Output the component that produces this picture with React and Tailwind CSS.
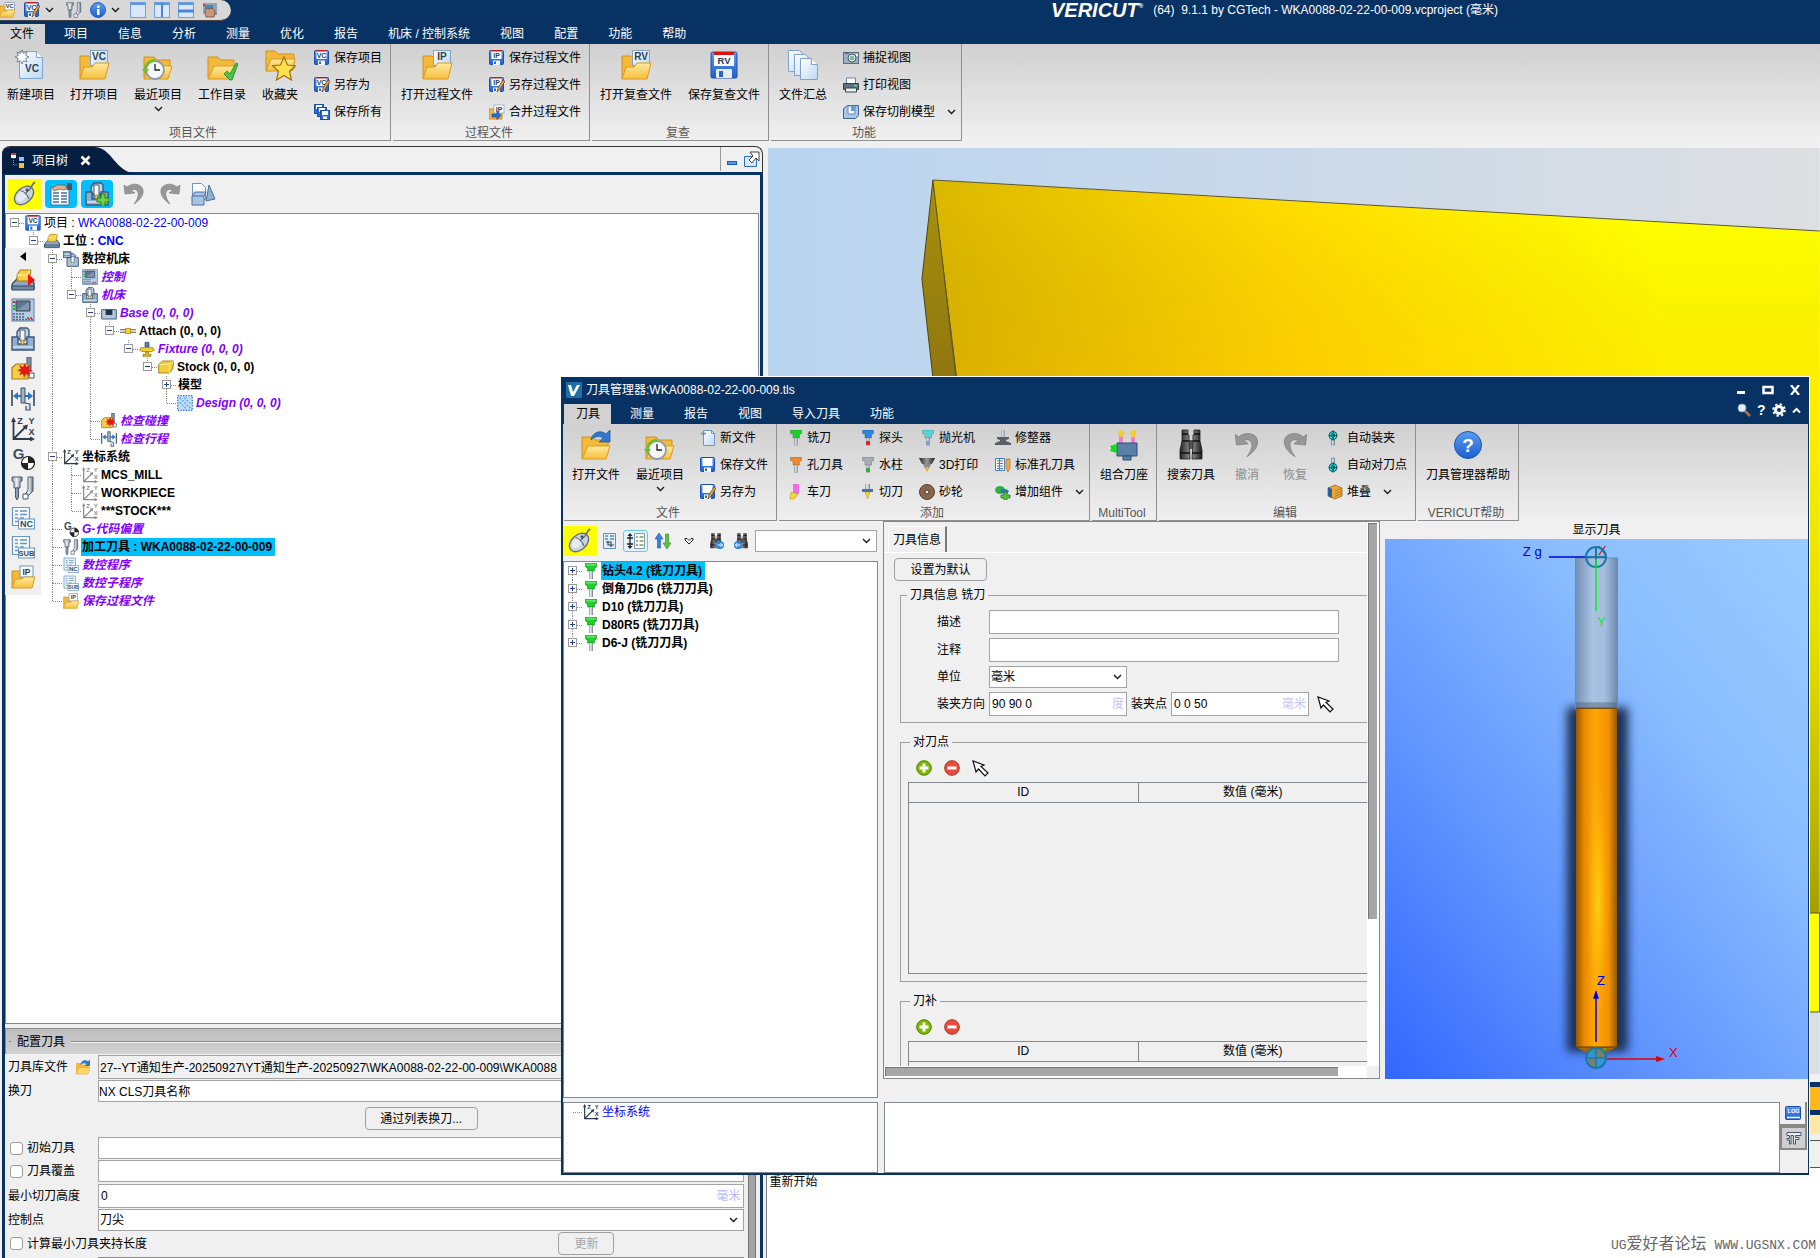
import { useState } from 'react';

/* ---------- shared svg paint ---------- */

const SvgDefs = () => (
    <svg className="absolute h-0 w-0" aria-hidden="true">
        <defs>
            <linearGradient id="gFolder" x1="0" y1="0" x2="0" y2="1">
                <stop offset="0" stopColor="#ffe9a0" />
                <stop offset="1" stopColor="#f8bf3c" />
            </linearGradient>
            <linearGradient id="gBlue" x1="0" y1="0" x2="0" y2="1">
                <stop offset="0" stopColor="#5b9cf0" />
                <stop offset="1" stopColor="#1f5fd0" />
            </linearGradient>
            <linearGradient id="gPage" x1="0" y1="0" x2="1" y2="1">
                <stop offset="0" stopColor="#ffffff" />
                <stop offset="1" stopColor="#bcd8f2" />
            </linearGradient>
            <linearGradient id="gMetal" x1="0" y1="0" x2="1" y2="0">
                <stop offset="0" stopColor="#8b97a5" />
                <stop offset="0.45" stopColor="#eef2f6" />
                <stop offset="1" stopColor="#6b7785" />
            </linearGradient>
            <linearGradient id="gDark" x1="0" y1="0" x2="1" y2="0">
                <stop offset="0" stopColor="#222222" />
                <stop offset="0.5" stopColor="#9a9a9a" />
                <stop offset="1" stopColor="#1a1a1a" />
            </linearGradient>
        </defs>
    </svg>
);

const Badge = ({ x, y, size, children, fill = '#2c3e57' }) => (
    <text x={x} y={y} fontSize={size} fontWeight="700" textAnchor="middle" fill={fill} fontFamily="Liberation Sans, sans-serif">{children}</text>
);

const Chevron = ({ className = '' }) => (
    <svg width="9" height="6" viewBox="0 0 9 6" className={className}>
        <path d="M1 1l3.500 3.500L8 1" fill="none" stroke="#1a1a1a" strokeWidth="1.400" />
    </svg>
);

/* ---------- 32px icons ---------- */

const FolderShape = () => (
    <>
        <path d="M2 30V8h10l3 3h13v8" fill="#f3b93a" stroke="#d1921a" />
        <path d="M2 30l6-13h22l-4 13z" fill="url(#gFolder)" stroke="#d99a1e" />
    </>
);

const FolderBadge = ({ badge }) => (
    <svg width="32" height="32" viewBox="0 0 32 32">
        <path d="M2 30V7h9l3 3h14v8" fill="#f3b93a" stroke="#d1921a" />
        <rect x="12.500" y="1.500" width="17" height="15" fill="url(#gPage)" stroke="#7fa3cc" />
        <Badge x="21" y="11" size="10">{badge}</Badge>
        <path d="M2 30l4-12h8l3-4h14l-4 16z" fill="url(#gFolder)" stroke="#d99a1e" />
    </svg>
);

const NewProjectIcon = () => (
    <svg width="32" height="32" viewBox="0 0 32 32">
        <path d="M4.500 2.500h17l6 6v21h-23z" fill="url(#gPage)" stroke="#7fa3cc" />
        <path d="M21.500 2.500v6h6" fill="#fff" stroke="#7fa3cc" />
        <path d="M7 1l1.500 3.500L12 3l-1.300 3.500L14 8l-3.300 1.500L12 13l-3.500-1.300L7 15l-1.500-3.300L2 13l1.300-3.500L0 8l3.300-1.500L2 3l3.500 1.500z" fill="#fff" stroke="#5d6b7a" strokeWidth="0.800" />
        <Badge x="17" y="23" size="10">VC</Badge>
    </svg>
);

const RecentIcon = () => (
    <svg width="32" height="32" viewBox="0 0 32 32">
        <FolderShape />
        <circle cx="13" cy="21" r="9" fill="#f4f6f8" stroke="#8d9aa8" strokeWidth="1.800" />
        <path d="M13 15v6h5" fill="none" stroke="#222" strokeWidth="1.300" />
        <path d="M3.500 22C2.500 16 7 11.500 13 11" fill="none" stroke="#6cbf28" strokeWidth="2.600" />
        <path d="M0 20h7l-3.500 5z" fill="#6cbf28" />
    </svg>
);

const WorkDirIcon = () => (
    <svg width="32" height="32" viewBox="0 0 32 32">
        <FolderShape />
        <path d="M18 25l3-3 3 3 6-11 2 1-6 16h-2z" fill="#4cc24a" stroke="#1f8420" strokeWidth="0.800" />
    </svg>
);

const FavoriteIcon = () => (
    <svg width="32" height="32" viewBox="0 0 32 32">
        <path d="M2 22V2h9l3 3h16v15z" fill="#f3b93a" stroke="#d1921a" />
        <path d="M2 22l5-12h24l-3 12z" fill="url(#gFolder)" stroke="#d99a1e" />
        <path d="M20 8l3.500 8 8 .8-6 5.500 2 8.700-7.500-4.500L12.500 31l2-8.700-6-5.500 8-.8z" fill="#ffe14d" stroke="#a36b1a" strokeWidth="1.200" />
    </svg>
);

const OpenFileIcon = () => (
    <svg width="32" height="32" viewBox="0 0 32 32">
        <FolderShape />
        <path d="M11 11C12 4 20 0 26 5l4-4v12H19l4-4c-4-3-9-1-12 2z" fill="#2f78cf" stroke="#174f99" strokeWidth="0.700" />
    </svg>
);

const FloppyLarge = () => (
    <svg width="32" height="32" viewBox="0 0 32 32">
        <rect x="3" y="3" width="26" height="26" rx="1.500" fill="url(#gBlue)" stroke="#1a4fae" />
        <rect x="6" y="3" width="20" height="14" fill="#fff" />
        <rect x="6" y="3" width="20" height="3" fill="#e01010" />
        <Badge x="16" y="15" size="9.500">RV</Badge>
        <rect x="8" y="20" width="16" height="9" rx="1" fill="#e6ebf2" />
        <rect x="11" y="22" width="4" height="6" fill="#2a66cf" />
    </svg>
);

const SummaryIcon = () => (
    <svg width="32" height="32" viewBox="0 0 32 32">
        <path d="M1.500 1.500h11l5 5v16h-16z" fill="url(#gPage)" stroke="#7fa3cc" />
        <path d="M7.500 5.500h11l5 5v16h-16z" fill="url(#gPage)" stroke="#7fa3cc" />
        <path d="M13.500 9.500h11l6 6v15h-17z" fill="url(#gPage)" stroke="#7fa3cc" />
        <path d="M24.500 9.500v6h6" fill="#fff" stroke="#7fa3cc" />
    </svg>
);

const MultiToolIcon = () => (
    <svg width="32" height="32" viewBox="0 0 32 32">
        <path d="M11 7h4v8h-4zM23 7h4v8h-4z" fill="#f57ad6" />
        <path d="M10 2l4-1 2 2v6l-5-2zM22 3l4-2h2v6l-4 2z" fill="#f4cf2a" />
        <path d="M9 14h20v13H9z" fill="#5a7fa8" stroke="#2f4c70" />
        <path d="M15 27h8v4h-8z" fill="#5a7fa8" stroke="#2f4c70" />
        <path d="M2 17l7-2v9l-7-2z" fill="#1fd02a" />
        <path d="M0 18h3v3H0z" fill="#cfe8d0" />
    </svg>
);

const Binoculars = ({ size = 32 }) => (
    <svg width={size} height={size} viewBox="0 0 32 32">
        <path d="M13 11h6v9h-6z" fill="#555" />
        <path d="M7 1h6v5h1v6l1 18H5v-9l2-9V6zM19 1h6v5l0 6 2 9v9H17l1-18V6h1z" fill="url(#gDark)" stroke="#1e1e1e" strokeWidth="0.800" />
        <path d="M5 24h10M17 24h10M7 12h7M18 12h7M7 5h6M19 5h6" stroke="#111" strokeWidth="1.600" />
    </svg>
);

const UndoIcon = ({ size = 24, flip = false, fill = '#979797' }) => (
    <svg width={size} height={size} viewBox="0 0 24 24" className={flip ? '-scale-x-100' : ''}>
        <path d="M2 3l1 9 10-1-4-3c6-2 8 2 7 6-.5 3-2 5-4 8 6-4 10-9 9-14C20 2 11 0 5 5z" fill={fill} stroke="#7a7a7a" strokeWidth="0.600" />
    </svg>
);

const HelpIcon = () => (
    <svg width="32" height="32" viewBox="0 0 32 32">
        <circle cx="16" cy="16" r="13.500" fill="url(#gBlue)" stroke="#1a56b5" />
        <Badge x="16" y="23" size="19" fill="#fff">?</Badge>
    </svg>
);

/* ---------- 16px icons ---------- */

const Floppy = ({ badge, pencil, merge }) => (
    <svg width="16" height="16" viewBox="0 0 16 16" className="shrink-0">
        {merge && <path d="M0 15V5h7l2 2h4v8z" fill="#f3b93a" stroke="#a87510" strokeWidth="0.700" />}
        {!merge && <rect x="0.500" y="0.500" width="14" height="14" rx="1" fill="url(#gBlue)" stroke="#1a4fae" />}
        <rect x={merge ? 5 : 2.5} y="1" width="10" height="8" fill="#fff" stroke={merge ? '#7fa3cc' : 'none'} strokeWidth="0.700" />
        {badge && !merge && <rect x="2.500" y="0" width="10" height="1.500" fill="#c81818" />}
        {badge && <Badge x={merge ? 10 : 7.5} y="8" size="7">{badge}</Badge>}
        {!merge && <path d="M4 10.500h7V15H4z" fill="#f4f7fb" />}
        {!merge && <path d="M5 11.500h2V14H5z" fill="#2a66cf" />}
        {pencil && <path d="M8 15l1-4 5-8 2 1.300-5 8z" fill="#f0a53a" stroke="#5b3a12" strokeWidth="0.700" />}
        {merge && <path d="M3 10h5V7l4 4.500-4 4V13H3z" fill="#2b6cd6" stroke="#173f8c" strokeWidth="0.600" />}
    </svg>
);

const FloppyAll = () => (
    <svg width="16" height="16" viewBox="0 0 16 16" className="shrink-0">
        {[0, 3, 6].map((o) => (
            <g key={o}>
                <rect x={o + 0.5} y={o + 0.5} width="9" height="9" fill="#2f6fdc" stroke="#1a4fae" />
                <rect x={o + 2} y={o + 1} width="6" height="4" fill="#fff" />
                <rect x={o + 3} y={o + 6.5} width="4" height="2.500" fill="#fff" />
            </g>
        ))}
    </svg>
);

const CameraIcon = () => (
    <svg width="16" height="16" viewBox="0 0 16 16" className="shrink-0">
        <rect x="0.500" y="2.500" width="15" height="11" fill="#9fb0c2" stroke="#5a6b7d" />
        <path d="M2 2h4v2H2z" fill="#5a6b7d" />
        <circle cx="9" cy="8" r="4" fill="#fff" stroke="#3f5063" />
        <circle cx="9" cy="8" r="2.500" fill="#6cc0a0" />
        <path d="M13 4h2v2h-2z" fill="#fff" />
    </svg>
);

const PrinterIcon = () => (
    <svg width="16" height="16" viewBox="0 0 16 16" className="shrink-0">
        <path d="M3.500 1h9v6h-9z" fill="#fff" stroke="#6c87a5" />
        <path d="M0.500 6.500h15v6h-15z" fill="#5f7286" stroke="#33414f" />
        <path d="M2.500 11h11v4h-11z" fill="#eaf2e6" stroke="#33414f" />
        <path d="M11 8h3v1.500h-3z" fill="#7ed957" />
    </svg>
);

const CutModelIcon = () => (
    <svg width="16" height="16" viewBox="0 0 16 16" className="shrink-0">
        <path d="M0.500 4.500l4-3h11v10l-3 3h-12z" fill="#a9c6ea" stroke="#3e6497" />
        <path d="M5 2h7v8l-7 0z" fill="#f5f9fd" stroke="#6289bb" />
        <path d="M8 2h4v5H8z" fill="#6f9bd6" />
    </svg>
);

const NewFileIcon = () => (
    <svg width="16" height="16" viewBox="0 0 16 16" className="shrink-0">
        <path d="M3.500 0.500h8l3 3v12h-11z" fill="url(#gPage)" stroke="#6f96c2" />
        <path d="M11.500 0.500v3h3" fill="none" stroke="#6f96c2" />
        <path d="M3.500 1v5M1 3.500h5" stroke="#6f8fb3" strokeWidth="1.400" />
    </svg>
);

// small cutter glyph: holder on top, shank below
const CutterIcon = ({ color, tip }) => (
    <svg width="16" height="16" viewBox="0 0 16 16" className="shrink-0">
        <path d="M3.500 0h11v3.500l-2 1V8H6V4.500l-2.500-1z" fill={color} stroke="#00000055" strokeWidth="0.600" />
        <path d="M7.500 8h3v7.500h-3z" fill="url(#gMetal)" stroke="#8b97a5" strokeWidth="0.400" />
        {tip && <circle cx="9" cy="13" r="2.200" fill={tip} />}
    </svg>
);

const TurnIcon = () => (
    <svg width="16" height="16" viewBox="0 0 16 16" className="shrink-0">
        <path d="M6 0h6v9l-3 4H6z" fill="#ef6fe0" />
        <path d="M4 8l7 2-4 5H3z" fill="#f4d92c" stroke="#a88a10" strokeWidth="0.500" />
    </svg>
);

const KnifeIcon = () => (
    <svg width="16" height="16" viewBox="0 0 16 16" className="shrink-0">
        <path d="M6 0h5v5H6z" fill="url(#gMetal)" />
        <path d="M3 5h11v3H3z" fill="#4a6fb5" />
        <path d="M6 8h5l-2.500 7z" fill="#f4d92c" stroke="#a88a10" strokeWidth="0.500" />
    </svg>
);

const PrintHeadIcon = () => (
    <svg width="16" height="16" viewBox="0 0 16 16" className="shrink-0">
        <path d="M0 1h16l-3 6H3z" fill="url(#gDark)" />
        <path d="M4 7h8l-2 5H6z" fill="#8a8a8a" />
        <path d="M6 10h4l-2 6z" fill="#f2b51f" />
    </svg>
);

const WheelIcon = () => (
    <svg width="16" height="16" viewBox="0 0 16 16" className="shrink-0">
        <circle cx="8" cy="8" r="7.500" fill="#86664c" stroke="#5a4030" />
        <circle cx="8" cy="8" r="2" fill="#efe6dc" stroke="#4b3526" />
    </svg>
);

const DresserIcon = () => (
    <svg width="16" height="16" viewBox="0 0 16 16" className="shrink-0">
        <path d="M6.500 0h3v7h-3z" fill="url(#gMetal)" />
        <path d="M2 7h12v2l-3 1v1l5 2v2H0v-2l5-2v-1L2 9z" fill="#5c5f63" />
    </svg>
);

const HoleListIcon = () => (
    <svg width="16" height="16" viewBox="0 0 16 16" className="shrink-0">
        <path d="M0.500 1.500h9v12h-9z" fill="#fff" stroke="#4a7cc0" />
        <path d="M2 4h6M2 6.500h6M2 9h6M2 11.500h6M4.500 2v11" stroke="#4a7cc0" />
        <path d="M11 2h4v9l-2 4-2-4z" fill="#f0a848" stroke="#a8641c" strokeWidth="0.600" />
    </svg>
);

const AddPartIcon = () => (
    <svg width="16" height="16" viewBox="0 0 16 16" className="shrink-0">
        <ellipse cx="5" cy="6" rx="5" ry="4" fill="#27b43a" />
        <path d="M5 7c3-3 7-2 9 0l-3 5z" fill="#2d72cf" />
        <path d="M9 8h3v3h3v3h-3v2.500H9V14H6v-3h3z" fill="#58c63a" stroke="#1e7a1a" strokeWidth="0.800" />
    </svg>
);

const TargetIcon = ({ down }) => (
    <svg width="16" height="16" viewBox="0 0 16 16" className={down ? 'shrink-0 -scale-y-100' : 'shrink-0'}>
        <path d="M4.500 9h3v6h-3z" fill="url(#gMetal)" stroke="#5f7286" strokeWidth="0.500" />
        <path d="M6 0l4.500 5.500L6 11 1.500 5.500z" fill="#0f6f78" />
        <circle cx="6" cy="5.500" r="4" fill="#2be4e4" stroke="#0e5b63" />
        <circle cx="6" cy="5.500" r="1.800" fill="none" stroke="#0b4f4f" />
        <path d="M6 1v9M2 5.500h8" stroke="#0b4f4f" strokeWidth="0.800" />
    </svg>
);

const StackIcon = () => (
    <svg width="16" height="16" viewBox="0 0 16 16" className="shrink-0">
        <path d="M1 4l7-3 7 3v8l-7 3-7-3z" fill="#eaa632" stroke="#8f5a10" strokeWidth="0.700" />
        <path d="M8 7l7-3M8 10l7-3M8 12.500l7-3" stroke="#a86a14" strokeWidth="0.700" />
        <path d="M1 3l4 2v9l-4-2z" fill="#2c5d9e" />
    </svg>
);

const WindowIcon = ({ split }) => (
    <svg width="16" height="16" viewBox="0 0 16 16">
        <rect x="0.500" y="0.500" width="15" height="15" fill="#d9e9fb" stroke="#6f9fe0" />
        <path d="M1 1h14v2H1z" fill="#5f97e6" />
        {split === 'v' && <path d="M8 1v14" stroke="#4a86dc" strokeWidth="2" />}
        {split === 'h' && <path d="M0 9h16" stroke="#4a86dc" strokeWidth="3" />}
    </svg>
);

const HandPanelIcon = () => (
    <svg width="16" height="16" viewBox="0 0 16 16">
        <rect x="1" y="1" width="14" height="11" fill="#8fa3b8" />
        <path d="M3 3h8v4H3z" fill="#4b86b8" />
        <path d="M1 2h2v2H1z" fill="#e03030" />
        <path d="M11 11h4v2h-4z" fill="#7c8fa4" />
        <path d="M4 15l-1-6 2-3 2 1 3-1 3 3-1 6z" fill="#c9977a" stroke="#6b4632" strokeWidth="0.700" />
    </svg>
);

const InfoIcon = () => (
    <svg width="16" height="16" viewBox="0 0 16 16">
        <circle cx="8" cy="8" r="7.500" fill="url(#gBlue)" stroke="#2a62bd" />
        <path d="M7 7h2.500v6H7zM7 3.500h2.500V6H7z" fill="#fff" />
    </svg>
);

const PointerIcon = () => (
    <svg width="17" height="17" viewBox="0 0 17 17">
        <path d="M1 1l3 11 2.500-3L13 16l3-3-7-6.500L12 5z" fill="#fff" stroke="#111" strokeWidth="1.200" />
    </svg>
);

const PlusIcon = () => (
    <svg width="16" height="16" viewBox="0 0 16 16">
        <circle cx="8" cy="8" r="7.300" fill="#7cb800" stroke="#4f8200" />
        <path d="M6.500 3.500h3v3h3v3h-3v3h-3v-3h-3v-3h3z" fill="#fff" />
    </svg>
);

const MinusIcon = () => (
    <svg width="16" height="16" viewBox="0 0 16 16">
        <circle cx="8" cy="8" r="7.300" fill="#e94b3c" stroke="#b52a1e" />
        <path d="M3.500 6.500h9v3h-9z" fill="#fff" />
    </svg>
);

const MouseIcon = () => (
    <svg width="26" height="26" viewBox="0 0 26 26">
        <path d="M18 8c2-2 1-4 5-7" fill="none" stroke="#6b7280" strokeWidth="1.800" />
        <ellipse cx="12" cy="14.500" rx="11" ry="7.500" transform="rotate(-42 12 14.500)" fill="#ccd4de" stroke="#5f6c7d" strokeWidth="1.300" />
        <ellipse cx="10" cy="15" rx="6.500" ry="4" transform="rotate(-42 10 15)" fill="#e6ebf1" />
        <path d="M8.500 9.500c3.500 1 7 4.500 8.500 8.500M13 13l6-6" fill="none" stroke="#5f6c7d" strokeWidth="1.200" />
        <path d="M14 10l2-2" stroke="#48535f" strokeWidth="2.500" />
    </svg>
);

/* ---------- icons used in both the tree (16) and the side strip (24) ---------- */

const MachineArt = () => (
    <>
        <path d="M6 12V5l3-4h7l2 2v9z" fill="#c2d4e6" stroke="#3c5876" strokeWidth="1.400" />
        <path d="M1 10h6v7h9v-7h7v13H1z" fill="#8fb0d2" stroke="#3c5876" strokeWidth="1.400" />
        <path d="M9 3h5v11H9z" fill="#f4f8fb" stroke="#3c5876" />
        <path d="M10 13h3v3l-1.500 2L10 16z" fill="#f0c52a" stroke="#8a6a10" strokeWidth="0.500" />
        <path d="M2 20h20" stroke="#d5e3f0" strokeWidth="1.500" />
    </>
);

const AxesArt = ({ color }) => (
    <>
        <path d="M2.500 4v18H20M3.500 21L15 9.500" fill="none" stroke={color} strokeWidth="1.800" />
        <path d="M2.500 0L0 5h5zM24 22l-5-2.500v5zM17 7.500l-5.500 1.500 4 4z" fill={color} />
        <Badge x="9" y="7" size="9" fill={color}>Z</Badge>
        <Badge x="20.500" y="7" size="9" fill={color}>Y</Badge>
        <Badge x="20.500" y="18" size="9" fill={color}>X</Badge>
    </>
);

const DocArt = ({ label }) => (
    <>
        <path d="M1.500 1.500h17v18h-17z" fill="#f4f9fe" stroke="#6a94c4" strokeWidth="1.200" />
        <path d="M4 5h3M9 5h7M4 8.500h3M9 8.500h7M4 12h3M9 12h4M4 15.500h3" stroke="#6a94c4" strokeWidth="1.400" />
        <rect x="7.500" y="13" width="16" height="10" fill="#f4f9fe" stroke="#6a94c4" />
        <Badge x="15.500" y="21" size={label === 'NC' ? 9 : 7.5} fill="#3a4b5e">{label}</Badge>
    </>
);

const treeArt = {
    project: (
        <>
            <rect x="1" y="1" width="22" height="22" rx="1" fill="url(#gBlue)" stroke="#1a4fae" />
            <rect x="4" y="1" width="16" height="13" fill="#fff" />
            <rect x="4" y="0" width="16" height="2.500" fill="#c81818" />
            <Badge x="12" y="12" size="10">VC</Badge>
            <path d="M6 16h12v7H6z" fill="#f4f7fb" />
            <path d="M8 17.500h3V22H8z" fill="#2a66cf" />
        </>
    ),
    station: (
        <>
            <path d="M2 15l4-4h14l3 4v6H1v-4z" fill="#8fa7c0" stroke="#33485e" strokeWidth="1.300" />
            <path d="M1 18h22v4H1z" fill="#6e8aa7" stroke="#33485e" />
            <path d="M6 7l3-5h11l-2 11H6z" fill="#f7cf47" stroke="#a67a12" />
            <path d="M6 7h10l3-5" fill="none" stroke="#fff3b8" />
        </>
    ),
    cnc: (
        <>
            <path d="M6 10h4V4h6l3 3v3h4v13H6z" fill="#a9c2dc" stroke="#3c5876" strokeWidth="1.400" />
            <path d="M12 8h5v9h-5z" fill="#eef3f8" stroke="#3c5876" />
            <path d="M13 17h3l-1.500 3z" fill="#f0c52a" />
            <path d="M0 1h12v9H0z" fill="#6e8caa" stroke="#34495f" />
            <path d="M2 3h8v3H2z" fill="#bcd4ea" />
            <path d="M2 8h2M5 8h2M8 8h2" stroke="#fff" strokeWidth="1.200" />
        </>
    ),
    control: (
        <>
            <rect x="1" y="1" width="22" height="22" fill="#b9cde2" stroke="#5f7c9b" />
            <path d="M5 3h14v10H5z" fill="#5f7790" stroke="#384b5e" />
            <path d="M6 12L18 4v8z" fill="#7f97af" />
            <path d="M2 4h2" stroke="#e02020" strokeWidth="2" />
            <path d="M2 8h2M2 11h2" stroke="#21b030" strokeWidth="2" />
            <path d="M2 16h12M2 19h12M2 21.500h20" stroke="#4c6885" strokeWidth="1.400" strokeDasharray="2 1" />
            <path d="M16 20h6" stroke="#e02020" strokeWidth="1.500" strokeDasharray="2 1" />
        </>
    ),
    machine: <MachineArt />,
    base: (
        <>
            <path d="M1 7h22v14H1z" fill="#b5c8da" stroke="#44607c" strokeWidth="1.500" />
            <path d="M7 7h10v8H7z" fill="#1f3348" />
        </>
    ),
    attach: (
        <>
            <path d="M0 10h24M0 14h24" stroke="#5b5b3c" strokeWidth="1.600" />
            <rect x="8" y="8" width="8" height="8" rx="1" fill="#f7cf2f" stroke="#8a6a10" />
        </>
    ),
    fixture: (
        <>
            <path d="M9 2h6v7H9z" fill="#5c7ea3" stroke="#2e4966" />
            <path d="M3 10h18l2 4-5 2H6l-5-2z" fill="#f7cf2f" stroke="#8a6a10" />
            <path d="M10 16h4v4h4v3H6v-3h4z" fill="#e8b920" stroke="#8a6a10" />
        </>
    ),
    stock: (
        <>
            <path d="M1 8l6-5h17l-2 12-5 6H1z" fill="#f4cc3d" stroke="#9b7614" strokeWidth="1.300" />
            <path d="M1 8h16l7-5M17 8v13" fill="none" stroke="#fff0a8" strokeWidth="1.300" />
        </>
    ),
    design: (
        <>
            <rect x="1" y="1" width="22" height="22" fill="#bcdcf8" stroke="#2b70b8" strokeWidth="1.800" strokeDasharray="2 2" />
            <path d="M4 4l16 16M4 11l9 9M11 4l9 9" stroke="#6aa6dc" strokeWidth="2" strokeDasharray="3 2" />
        </>
    ),
    collision: (
        <>
            <path d="M16 0h4v14h-4z" fill="#8296ab" stroke="#3e5064" />
            <path d="M18 16h5v5h-5z" fill="#fff" stroke="#3e5064" />
            <path d="M1 11l4-4h12v15H1z" fill="#f7cf47" stroke="#a67a12" strokeWidth="1.200" />
            <path d="M14 6l1.500 4 4-2-1.500 4 4 2-4 1 1 4-4-2-2 4-1-4-4 1 2-3-4-2 4-1-2-4 4 2z" fill="#e01818" />
        </>
    ),
    travel: (
        <>
            <path d="M1 3v16M23 3v16" stroke="#33485e" strokeWidth="1.600" />
            <path d="M2 9l5-4v3h3v2H7v3zM22 9l-5-4v3h-3v2h3v3z" fill="#2a74c9" />
            <path d="M10 1h4v15h-4z" fill="#9fb2c6" stroke="#3e5064" />
            <path d="M14 16l5 1v6h-4v-4" fill="#dce5ee" stroke="#3e5064" strokeWidth="1.200" />
        </>
    ),
    axes: <AxesArt color="#2d3b4b" />,
    axesGray: <AxesArt color="#8a8a8a" />,
    gcode: (
        <>
            <Badge x="7.500" y="13" size="15" fill="#3b4e63">G</Badge>
            <circle cx="17" cy="17" r="6.500" fill="#fff" stroke="#222" strokeWidth="1.200" />
            <path d="M17 17V10.500a6.500 6.500 0 0 1 6.500 6.500zM17 17v6.500a6.500 6.500 0 0 1-6.500-6.500z" fill="#222" />
        </>
    ),
    tools: (
        <>
            <path d="M1 1h10v4l-2 1v6H3V6L1 5z" fill="url(#gMetal)" stroke="#4a5a6b" />
            <path d="M4.500 12h3v9L6 24l-1.500-3z" fill="#8ea0b2" stroke="#4a5a6b" />
            <path d="M17 1h5v14l-4 4h-4l3-5z" fill="url(#gMetal)" stroke="#4a5a6b" />
            <path d="M12 18h5v5h-5z" fill="#fff" stroke="#4a5a6b" />
        </>
    ),
    nc: <DocArt label="NC" />,
    sub: <DocArt label="SUB" />,
    saveIp: (
        <>
            <path d="M1 23V6h7l2 2h10v6" fill="#f3b93a" stroke="#d1921a" />
            <rect x="9" y="1" width="13" height="11" fill="#fff" stroke="#6a94c4" />
            <Badge x="15.500" y="9.500" size="8.500">IP</Badge>
            <path d="M1 23l3-9h7l2-2h11l-3 11z" fill="url(#gFolder)" stroke="#d99a1e" />
        </>
    ),
    openVc: (
        <>
            <path d="M1 23V6h7l2 2h10v6" fill="#f3b93a" stroke="#d1921a" />
            <rect x="9" y="1" width="14" height="11" fill="#fff" stroke="#6a94c4" />
            <Badge x="16" y="9.500" size="8.500">VC</Badge>
            <path d="M1 23l3-9h7l2-2h11l-3 11z" fill="url(#gFolder)" stroke="#d99a1e" />
        </>
    ),
    mill: (
        <>
            <path d="M4 0h16v6l-3 2v4H7V8L4 6z" fill="#1fd02a" stroke="#0c7a18" />
            <path d="M5 1h14v3H5z" fill="#5be863" />
            <path d="M9 12h6v12H9z" fill="url(#gMetal)" />
        </>
    ),
};

const Art = ({ name, size = 16 }) => (
    <svg width={size} height={size} viewBox="0 0 24 24" className="shrink-0">{treeArt[name]}</svg>
);

/* ---------- tree ---------- */

// dotted guide cell; box is '+', '-' or undefined
const Guide = ({ up, down, across, box }) => (
    <svg width="19" height="18" viewBox="0 0 19 18" className="shrink-0">
        <g stroke="#8a8a8a" strokeDasharray="1 1">
            {up && <path d="M8.500 0v9" />}
            {down && <path d="M8.500 9v9" />}
            {across && <path d="M9 9.500h9" />}
        </g>
        {box && (
            <g>
                <rect x="4.500" y="4.500" width="8" height="8" fill="#fff" stroke="#9a9a9a" />
                <path d="M6 8.500h5" stroke="#23408e" />
                {box === '+' && <path d="M8.500 6v5" stroke="#23408e" />}
            </g>
        )}
    </svg>
);

const projectRows = [
    { level: 0, box: '-', icon: 'project', text: '项目 : ', tail: 'WKA0088-02-22-00-009', style: 'plain' },
    { level: 1, box: '-', icon: 'station', text: '工位 : ', tail: 'CNC' },
    { level: 2, box: '-', icon: 'cnc', text: '数控机床' },
    { level: 3, icon: 'control', text: '控制', style: 'dim' },
    { level: 3, box: '-', icon: 'machine', text: '机床', style: 'dim' },
    { level: 4, box: '-', icon: 'base', text: 'Base (0, 0, 0)', style: 'dim' },
    { level: 5, box: '-', icon: 'attach', text: 'Attach (0, 0, 0)' },
    { level: 6, box: '-', icon: 'fixture', text: 'Fixture (0, 0, 0)', style: 'dim' },
    { level: 7, box: '-', icon: 'stock', text: 'Stock (0, 0, 0)' },
    { level: 8, box: '+', text: '模型' },
    { level: 8, icon: 'design', text: 'Design (0, 0, 0)', style: 'dim' },
    { level: 4, icon: 'collision', text: '检查碰撞', style: 'dim' },
    { level: 4, icon: 'travel', text: '检查行程', style: 'dim' },
    { level: 2, box: '-', icon: 'axes', text: '坐标系统' },
    { level: 3, icon: 'axesGray', text: 'MCS_MILL' },
    { level: 3, icon: 'axesGray', text: 'WORKPIECE' },
    { level: 3, icon: 'axesGray', text: '***STOCK***' },
    { level: 2, icon: 'gcode', text: 'G-代码偏置', style: 'dim' },
    { level: 2, icon: 'tools', text: '加工刀具 : WKA0088-02-22-00-009', selected: true },
    { level: 2, icon: 'nc', text: '数控程序', style: 'dim' },
    { level: 2, icon: 'sub', text: '数控子程序', style: 'dim' },
    { level: 2, icon: 'saveIp', text: '保存过程文件', style: 'dim' },
];

const toolRows = ['钻头4.2 (铣刀刀具)', '倒角刀D6 (铣刀刀具)', 'D10 (铣刀刀具)', 'D80R5 (铣刀刀具)', 'D6-J (铣刀刀具)'].map((text, i) => ({
    level: 0, box: '+', icon: 'mill', text, selected: i === 0,
}));

const continues = (rows, index, level) => {
    for (let i = index + 1; i < rows.length; i++) {
        if (rows[i].level < level) return false;
        if (rows[i].level === level) return true;
    }
    return false;
};

const rowStyles = {
    plain: '',
    bold: 'font-bold',
    dim: 'font-bold italic text-[#8000ff]',
};

const Tree = ({ rows }) => (
    <ul>
        {rows.map((row, i) => (
            <li key={row.text} className="flex h-[18px] items-center whitespace-nowrap">
                {Array.from({ length: row.level }, (_, level) => {
                    const line = continues(rows, i, level);
                    return <Guide key={level} up={line} down={line} />;
                })}
                <Guide up={i > 0} down={continues(rows, i, row.level)} across box={row.box} />
                {row.icon && <Art name={row.icon} />}
                <span className={`${row.icon ? 'ml-[2px]' : ''} h-[18px] pr-[3px] pl-px leading-[18px] ${rowStyles[row.style || 'bold']} ${row.selected ? 'bg-[#00bfff]' : ''}`}>
                    {row.text}
                    {row.tail && <span className="text-[#0000ff]">{row.tail}</span>}
                </span>
            </li>
        ))}
    </ul>
);

/* ---------- ribbon ---------- */

const Group = ({ label, width, children }) => (
    <section className={`flex h-[97px] shrink-0 flex-col border-r border-b border-[#8f8f8f] ${width}`}>
        <div className="flex h-[82px]">{children}</div>
        <h3 className="pr-1 text-center leading-[14px] text-[#555]">{label}</h3>
    </section>
);

const BigButton = ({ icon, label, width = 'w-16', drop, disabled }) => (
    <button type="button" disabled={disabled} className={`flex shrink-0 flex-col items-center pt-[5px] whitespace-nowrap ${width} ${disabled ? 'text-[#8a8a8a]' : ''}`}>
        <span className="flex h-8 items-center">{icon}</span>
        <span className="mt-[6px] leading-4">{label}</span>
        {drop && <Chevron className="mt-[3px]" />}
    </button>
);

const SmallColumn = ({ items, className = 'pl-2' }) => (
    <div className={`flex shrink-0 flex-col ${className}`}>
        {items.map(({ icon, label, drop }) => (
            <button key={label} type="button" className="flex h-[27px] items-center gap-1 whitespace-nowrap">
                {icon}
                <span>{label}</span>
                {drop && <Chevron className="ml-2" />}
            </button>
        ))}
    </div>
);

const Tabs = ({ items, first }) => (
    <nav className="flex h-5 text-white">
        {items.map((name, i) => (
            <button key={name} type="button" className={i === 0 ? `mr-1 bg-[#d2d2d2] text-left text-black ${first}` : 'px-[15px]'}>{name}</button>
        ))}
    </nav>
);

const MainHeader = () => (
    <header>
        <div className="flex h-6 items-start bg-[#083264]">
            <div className="flex h-[21px] w-[231px] shrink-0 items-center rounded-r-full border-b border-[#444] bg-[#d8d8d8]">
                <button type="button" className="-ml-px" aria-label="打开"><Art name="openVc" /></button>
                <button type="button" className="ml-[9px]" aria-label="保存"><Floppy badge="VC" pencil /></button>
                <Chevron className="ml-[5px]" />
                <button type="button" className="ml-3" aria-label="刀具"><Art name="tools" /></button>
                <button type="button" className="ml-2" aria-label="信息"><InfoIcon /></button>
                <Chevron className="ml-[5px]" />
                <button type="button" className="ml-[10px]" aria-label="单视图"><WindowIcon /></button>
                <button type="button" className="ml-2" aria-label="左右视图"><WindowIcon split="v" /></button>
                <button type="button" className="ml-2" aria-label="上下视图"><WindowIcon split="h" /></button>
                <button type="button" className="ml-2" aria-label="面板"><HandPanelIcon /></button>
            </div>
            <h1 className="flex flex-1 justify-end gap-[10px] pr-[322px] text-white">
                <span className="text-xl leading-5 font-bold italic">VERICUT<span className="align-top text-[6px] leading-3">®</span></span>
                <span className="leading-5 whitespace-pre">(64)  9.1.1 by CGTech - WKA0088-02-22-00-009.vcproject (毫米)</span>
            </h1>
        </div>
        <div className="bg-[#083264]">
            <Tabs first="w-[45px] pl-[10px]" items={['文件', '项目', '信息', '分析', '测量', '优化', '报告', '机床 / 控制系统', '视图', '配置', '功能', '帮助']} />
        </div>
        <div className="flex gap-[2px] bg-linear-to-b from-[#d0d0d0] to-[#f0f0f0]">
            <Group label="项目文件" width="w-[391px]">
                <BigButton icon={<NewProjectIcon />} label="新建项目" width="w-[62px]" />
                <BigButton icon={<FolderBadge badge="VC" />} label="打开项目" />
                <BigButton icon={<RecentIcon />} label="最近项目" drop />
                <BigButton icon={<WorkDirIcon />} label="工作目录" />
                <BigButton icon={<FavoriteIcon />} label="收藏夹" width="w-[52px]" />
                <SmallColumn items={[
                    { icon: <Floppy badge="VC" />, label: '保存项目' },
                    { icon: <Floppy badge="VC" pencil />, label: '另存为' },
                    { icon: <FloppyAll />, label: '保存所有' },
                ]} />
            </Group>
            <Group label="过程文件" width="w-[197px]">
                <BigButton icon={<FolderBadge badge="IP" />} label="打开过程文件" width="w-[88px]" />
                <SmallColumn items={[
                    { icon: <Floppy badge="IP" />, label: '保存过程文件' },
                    { icon: <Floppy badge="IP" pencil />, label: '另存过程文件' },
                    { icon: <Floppy badge="IP" merge />, label: '合并过程文件' },
                ]} />
            </Group>
            <Group label="复查" width="w-[177px]">
                <BigButton icon={<FolderBadge badge="RV" />} label="打开复查文件" width="w-[88px]" />
                <BigButton icon={<FloppyLarge />} label="保存复查文件" width="w-[88px]" />
            </Group>
            <Group label="功能" width="w-[191px]">
                <BigButton icon={<SummaryIcon />} label="文件汇总" />
                <SmallColumn items={[
                    { icon: <CameraIcon />, label: '捕捉视图' },
                    { icon: <PrinterIcon />, label: '打印视图' },
                    { icon: <CutModelIcon />, label: '保存切削模型', drop: true },
                ]} />
            </Group>
        </div>
    </header>
);

/* ---------- project panel ---------- */

const sideIcons = [
    ['station', '工位'], ['control', '控制'], ['machine', '机床'], ['collision', '检查碰撞'], ['travel', '检查行程'], ['axes', '坐标系统'],
    ['gcode', 'G-代码偏置'], ['tools', '加工刀具'], ['nc', '数控程序'], ['sub', '数控子程序'], ['saveIp', '保存过程文件'],
];

const SideStrip = () => (
    <div className="absolute top-[34px] -left-px flex h-[347px] w-9 flex-col items-center bg-[#f0f0f0] pb-[3px]">
        <button type="button" className="flex h-[17px] items-center" aria-label="收起">
            <svg width="6" height="9" viewBox="0 0 6 9"><path d="M6 0v9L0 4.500z" fill="#000" /></svg>
        </button>
        {sideIcons.map(([name, label]) => (
            <button key={name} type="button" aria-label={label} className="flex flex-1 items-center">
                {name === 'station' ? (
                    <svg width="24" height="24" viewBox="0 0 24 24">
                        {treeArt.station}
                        <path d="M17 6l7 6-7 6z" fill="#f01010" />
                    </svg>
                ) : <Art name={name} size={24} />}
            </button>
        ))}
    </div>
);

const PanelHeader = () => (
    <div className="flex h-[29px] items-start rounded-t-lg border-t border-r border-b-[3px] border-[#333] border-b-[#083264]">
        <div className="relative flex h-[27px] w-[136px] items-center text-white">
            <svg width="136" height="27" viewBox="0 0 136 27" className="absolute inset-0">
                <path d="M0 27V8Q0 0 8 0H92C110 0 112 24 134 27z" fill="#051f42" />
            </svg>
            <svg width="16" height="16" viewBox="0 0 16 16" className="relative ml-2">
                <path d="M1 1h5v4H1z" fill="#fff" />
                <path d="M1 0h5v2H1z" fill="#e03030" />
                <path d="M9 4h5v4H9z" fill="#8fc0f0" />
                <path d="M9 10h5v5H9z" fill="#f0c52a" />
                <path d="M3.500 5v7h5" fill="none" stroke="#7d93ad" strokeDasharray="1 1" />
            </svg>
            <span className="relative ml-[6px]">项目树</span>
            <button type="button" aria-label="关闭" className="relative ml-3">
                <svg width="11" height="11" viewBox="0 0 11 11"><path d="M1.500 1.500l8 8M9.500 1.500l-8 8" stroke="#fff" strokeWidth="2.600" /></svg>
            </button>
        </div>
        <div className="ml-auto flex h-[24px] items-center border-l border-[#999] pl-[6px]">
            <button type="button" aria-label="最小化">
                <svg width="10" height="16" viewBox="0 0 10 16"><rect x="0.500" y="10.500" width="9" height="3" fill="#4f97f0" stroke="#1a5bb8" /></svg>
            </button>
            <button type="button" aria-label="弹出" className="mr-[2px] ml-[7px]">
                <svg width="16" height="16" viewBox="0 0 16 16">
                    <path d="M0.500 5.500h12v10h-12z" fill="#d7e9fc" stroke="#2a6cc8" />
                    <path d="M6 1h9v9l-3-3-4 5-3-3 4-4z" fill="#fff" stroke="#444" />
                </svg>
            </button>
        </div>
    </div>
);

const PanelToolbar = () => (
    <div className="flex h-[38px] items-center pl-[3px]">
        <button type="button" aria-label="选择" className="flex h-[30px] w-[34px] items-center justify-center bg-[#ffff00]"><MouseIcon /></button>
        <button type="button" aria-label="属性" className="ml-[3px] flex h-7 w-8 items-center justify-center rounded-sm bg-[#00bfff]">
            <svg width="24" height="24" viewBox="0 0 24 24">
                <path d="M2 5h18v18H2z" fill="#fff" stroke="#3f6ea8" />
                <path d="M4 11h6M12 11h6M4 14h6M12 14h6M4 17h6M12 17h6M4 20h6M12 20h6" stroke="#3f6ea8" strokeWidth="1.500" />
                <path d="M3 6l5-3h8l2 4-5 1-2-1-6 2z" fill="#dfb08e" stroke="#7a5238" strokeWidth="0.700" />
                <path d="M18 1h5v7h-5z" fill="#4c5560" />
            </svg>
        </button>
        <button type="button" aria-label="添加机床" className="ml-1 flex h-7 w-8 items-center justify-center rounded-sm bg-[#00bfff]">
            <svg width="24" height="24" viewBox="0 0 24 24">
                <MachineArt />
                <path d="M16 12h4v4h4v4h-4v4h-4v-4h-4v-4h4z" fill="#6fd33c" stroke="#1e7a1a" />
            </svg>
        </button>
        <button type="button" aria-label="撤消" className="ml-[9px]"><UndoIcon size={24} /></button>
        <button type="button" aria-label="恢复" className="ml-3"><UndoIcon size={24} flip /></button>
        <button type="button" aria-label="模型" className="ml-2">
            <svg width="26" height="26" viewBox="0 0 26 26">
                <path d="M2.500 2.500h9l4 4v12h-13z" fill="#fff" stroke="#6f96c2" />
                <path d="M19 4l6 14-9 2z" fill="#8fb0d4" stroke="#4a6f9c" />
                <path d="M2 15l3-4h11l-2 4v9H2z" fill="#a9c4e2" stroke="#4a6f9c" />
                <path d="M2 15h12" stroke="#4a6f9c" />
            </svg>
        </button>
    </div>
);

const field = 'border border-[#a3a3a3] bg-white outline-none';

const ToolForm = () => {
    const [form, setForm] = useState({
        library: '27--YT通知生产-20250927\\YT通知生产-20250927\\WKA0088-02-22-00-009\\WKA0088',
        change: 'NX CLS刀具名称',
        initial: '',
        override: '',
        minHeight: '0',
        controlPoint: '刀尖',
    });
    const update = (e) => setForm({ ...form, [e.target.name]: e.target.value });
    const row = 'grid grid-cols-[93px_1fr] items-center';
    const box = 'h-[13px] w-[13px] shrink-0 appearance-none rounded-[3px] border border-[#9a9a9a] bg-white';

    return (
        <form className="flex pr-1">
            <div className="min-w-0 flex-1">
                <div className="flex h-[26px] items-center border-t border-l border-[#8a8a8a] bg-linear-to-b from-[#bdbdbd] to-[#d2d2d2] pl-[3px]">
                    <span className="h-px w-[2px] bg-[#777]" />
                    <h2 className="mx-[6px]">配置刀具</h2>
                    <span className="h-[2px] flex-1 border-t border-[#8a8a8a] bg-[#f2f2f2]" />
                </div>
                <div className={`${row} mt-px h-6`}>
                    <div className="flex items-center pl-[3px]">
                        <label htmlFor="library">刀具库文件</label>
                        <button type="button" aria-label="浏览" className="ml-[7px]">
                            <svg width="16" height="16" viewBox="0 0 32 32"><path d="M2 30V8h10l3 3h13v8" fill="#f3b93a" /><path d="M2 30l6-13h22l-4 13z" fill="#ffd869" stroke="#d99a1e" /><path d="M11 11C12 2 22 0 26 5l4-4v13H19l4-4c-4-3-9-1-12 2z" fill="#2f78cf" /></svg>
                        </button>
                    </div>
                    <input id="library" name="library" value={form.library} onChange={update} className="h-6 min-w-0 border border-[#a3a3a3] bg-[#f0f0f0] pb-px pl-px outline-none" />
                </div>
                <div className={`${row} mt-px h-[22px]`}>
                    <label htmlFor="change" className="pl-[3px]">换刀</label>
                    <input id="change" name="change" value={form.change} onChange={update} className={`${field} h-[22px] min-w-0 pb-px`} />
                </div>
                <div className="mt-[5px] ml-[93px] flex justify-center">
                    <button type="button" className="h-[23px] w-[113px] rounded border border-[#a0a0a0]">通过列表换刀...</button>
                </div>
                <div className={`${row} mt-[7px] h-[22px]`}>
                    <label className="flex items-center gap-1 pl-[5px]"><input type="checkbox" className={box} />初始刀具</label>
                    <input name="initial" aria-label="初始刀具" value={form.initial} onChange={update} className={`${field} h-[22px] min-w-0`} />
                </div>
                <div className={`${row} mt-px h-[22px]`}>
                    <label className="flex items-center gap-1 pl-[5px]"><input type="checkbox" className={box} />刀具覆盖</label>
                    <input name="override" aria-label="刀具覆盖" value={form.override} onChange={update} className={`${field} h-[22px] min-w-0`} />
                </div>
                <div className={`${row} mt-[2px] h-6`}>
                    <label htmlFor="minHeight" className="pl-[3px]">最小切刀高度</label>
                    <div className={`${field} flex h-6 items-center pr-[3px]`}>
                        <input id="minHeight" name="minHeight" value={form.minHeight} onChange={update} className="min-w-0 flex-1 pl-[2px] outline-none" />
                        <span className="text-[#b9b9ff]">毫米</span>
                    </div>
                </div>
                <div className={`${row} mt-px h-[22px]`}>
                    <label htmlFor="controlPoint" className="pl-[3px]">控制点</label>
                    <div className="relative flex">
                        <select id="controlPoint" name="controlPoint" value={form.controlPoint} onChange={update} className={`${field} h-[22px] flex-1 appearance-none pl-px`}>
                            <option>刀尖</option>
                        </select>
                        <Chevron className="pointer-events-none absolute top-2 right-[6px]" />
                    </div>
                </div>
                <div className="mt-px flex h-[23px] items-center justify-between pr-[130px] pl-[5px]">
                    <label className="flex items-center gap-1"><input type="checkbox" className={box} />计算最小刀具夹持长度</label>
                    <button type="button" disabled className="h-[23px] w-[56px] rounded border border-[#a0a0a0] text-[#a5a5a5]">更新</button>
                </div>
                <div className="mt-[2px] ml-[93px] h-px bg-[#8a8a8a]" />
            </div>
            <div className="mt-[26px] ml-1 w-2 border-r border-l border-[#777] bg-[#a3a3a3]" />
        </form>
    );
};

const ProjectPanel = () => (
    <aside className="flex w-[42%] shrink-0 flex-col pt-[5px] pr-px pl-[2px]">
        <PanelHeader />
        <div className="flex min-h-0 flex-1 flex-col border-r-[3px] border-l-[3px] border-[#083264]">
            <PanelToolbar />
            <div className="relative mr-px mb-1 min-h-0 flex-1 border border-[#828790] bg-white">
                <Tree rows={projectRows} />
                <SideStrip />
            </div>
            <ToolForm />
        </div>
    </aside>
);

/* ---------- machine view ---------- */

const Workspace = () => (
    <main className="flex min-w-0 flex-1 flex-col pt-[7px]">
        <div className="ml-1 min-h-0 flex-1">
            <svg width="100%" height="100%" viewBox="0 0 1052 926" preserveAspectRatio="none" className="block">
                <defs>
                    <linearGradient id="sky" x1="0" y1="0" x2="1" y2="0">
                        <stop offset="0" stopColor="#b9d4f1" />
                        <stop offset="0.700" stopColor="#d2dbe6" />
                        <stop offset="1" stopColor="#dddfe2" />
                    </linearGradient>
                    <linearGradient id="face" gradientUnits="userSpaceOnUse" x1="165" y1="200" x2="860" y2="20">
                        <stop offset="0" stopColor="#d6b400" />
                        <stop offset="0.500" stopColor="#ffd900" />
                        <stop offset="1" stopColor="#ffff00" />
                    </linearGradient>
                    <linearGradient id="shade" gradientUnits="userSpaceOnUse" x1="0" y1="60" x2="0" y2="765">
                        <stop offset="0" stopColor="#8a5a00" stopOpacity="0" />
                        <stop offset="0.250" stopColor="#ff9a00" stopOpacity="0.160" />
                        <stop offset="0.600" stopColor="#806000" stopOpacity="0.200" />
                        <stop offset="1" stopColor="#403800" stopOpacity="0.480" />
                    </linearGradient>
                    <linearGradient id="side" x1="0" y1="0" x2="0" y2="1">
                        <stop offset="0" stopColor="#a8900c" />
                        <stop offset="0.300" stopColor="#8c7410" />
                        <stop offset="1" stopColor="#7a6512" />
                    </linearGradient>
                </defs>
                <rect width="1052" height="926" fill="url(#sky)" />
                <path d="M165 32L154 131L165 230L215 765H255z" fill="url(#side)" stroke="#4b4210" />
                <path d="M165 32L1052 83V765H255z" fill="url(#face)" />
                <path d="M165 32L1052 83V765H255z" fill="url(#shade)" />
                <path d="M165 32L1052 83M165 32L188 230" stroke="#5c5634" fill="none" />
                <path d="M255 765H1052V864H265z" fill="#ffff00" stroke="#5c5634" />
            </svg>
        </div>
        <div className="mt-2 border-y-[5px] border-[#083264] bg-[#ffb81c]"><div className="h-[23px]" /></div>
        <div className="h-[19px] bg-[#ffe8a6]" />
        <div className="mt-[6px] h-[28px] border-y border-[#555]" />
        <section className="ml-[2px] h-[90px] border-l border-[#777] bg-white pt-[5px]">
            <p className="pl-[2px] leading-[18px]">重新开始</p>
        </section>
    </main>
);

/* ---------- tool manager window ---------- */

const ManagerHeader = () => (
    <header className="bg-[#083264] text-white">
        <div className="flex">
            <div className="flex-1">
                <h2 className="mb-[2px] flex h-[25px] items-center gap-1 pl-[3px]">
                    <svg width="16" height="16" viewBox="0 0 16 16">
                        <rect width="16" height="16" rx="1" fill="#1d6fa5" />
                        <path d="M2 3h3l2 7 4-7h3L8 14H5z" fill="#fff" />
                    </svg>
                    刀具管理器:WKA0088-02-22-00-009.tls
                </h2>
                <div className="pl-px">
                    <Tabs first="w-[47px] pl-3" items={['刀具', '测量', '报告', '视图', '导入刀具', '功能']} />
                </div>
            </div>
            <div className="flex flex-col">
                <div className="mb-[2px] flex h-[25px] items-center gap-4 pr-2">
                    <button type="button" aria-label="最小化"><svg width="9" height="10" viewBox="0 0 9 10"><path d="M0 6h8v3H0z" fill="#fff" /></svg></button>
                    <button type="button" aria-label="最大化"><svg width="12" height="10" viewBox="0 0 12 10"><path d="M1.500 2h9v6h-9z" fill="none" stroke="#fff" strokeWidth="2.500" /></svg></button>
                    <button type="button" aria-label="关闭"><svg width="10" height="10" viewBox="0 0 10 10"><path d="M1 0l8 10M9 0L1 10" stroke="#fff" strokeWidth="2.200" /></svg></button>
                </div>
                <div className="flex h-3 items-center gap-[6px] pr-[6px]">
                    <button type="button" aria-label="搜索"><svg width="14" height="14" viewBox="0 0 14 14"><circle cx="5" cy="5" r="4" fill="#dff0ff" stroke="#9ab" /><path d="M8 8l5 5" stroke="#b07038" strokeWidth="2.500" /></svg></button>
                    <button type="button" className="text-sm leading-3 font-bold">?</button>
                    <button type="button" aria-label="设置"><svg width="14" height="14" viewBox="0 0 14 14"><circle cx="7" cy="7" r="3.500" fill="none" stroke="#fff" strokeWidth="3" /><circle cx="7" cy="7" r="5.800" fill="none" stroke="#fff" strokeWidth="2" strokeDasharray="2.300 2.250" /></svg></button>
                    <button type="button" aria-label="折叠"><svg width="9" height="7" viewBox="0 0 9 7"><path d="M1 5.500L4.500 2 8 5.500" fill="none" stroke="#fff" strokeWidth="2" /></svg></button>
                </div>
            </div>
        </div>
    </header>
);

const ManagerRibbon = () => (
    <div className="flex gap-[2px] bg-linear-to-b from-[#d0d0d0] to-[#f0f0f0] pl-px">
        <Group label="文件" width="w-[213px]">
            <BigButton icon={<OpenFileIcon />} label="打开文件" />
            <BigButton icon={<RecentIcon />} label="最近项目" drop />
            <SmallColumn items={[
                { icon: <NewFileIcon />, label: '新文件' },
                { icon: <Floppy />, label: '保存文件' },
                { icon: <Floppy pencil />, label: '另存为' },
            ]} />
        </Group>
        <Group label="添加" width="w-[311px]">
            <SmallColumn className="w-20 pl-2" items={[
                { icon: <CutterIcon color="#1fd02a" />, label: '铣刀' },
                { icon: <CutterIcon color="#ef8a2c" />, label: '孔刀具' },
                { icon: <TurnIcon />, label: '车刀' },
            ]} />
            <SmallColumn className="w-[60px]" items={[
                { icon: <CutterIcon color="#2a86e0" tip="#e02020" />, label: '探头' },
                { icon: <CutterIcon color="#a5adb5" tip="#2fae3c" />, label: '水柱' },
                { icon: <KnifeIcon />, label: '切刀' },
            ]} />
            <SmallColumn className="w-[76px]" items={[
                { icon: <CutterIcon color="#58d3d8" tip="#7da0c8" />, label: '抛光机' },
                { icon: <PrintHeadIcon />, label: '3D打印' },
                { icon: <WheelIcon />, label: '砂轮' },
            ]} />
            <SmallColumn className="" items={[
                { icon: <DresserIcon />, label: '修整器' },
                { icon: <HoleListIcon />, label: '标准孔刀具' },
                { icon: <AddPartIcon />, label: '增加组件', drop: true },
            ]} />
        </Group>
        <Group label="MultiTool" width="w-[65px]">
            <BigButton icon={<MultiToolIcon />} label="组合刀座" />
        </Group>
        <Group label="编辑" width="w-[257px]">
            <BigButton icon={<Binoculars />} label="搜索刀具" />
            <BigButton icon={<UndoIcon size={28} />} label="撤消" width="w-12" disabled />
            <BigButton icon={<UndoIcon size={28} flip />} label="恢复" width="w-12" disabled />
            <SmallColumn items={[
                { icon: <TargetIcon />, label: '自动装夹' },
                { icon: <TargetIcon down />, label: '自动对刀点' },
                { icon: <StackIcon />, label: '堆叠', drop: true },
            ]} />
        </Group>
        <Group label="VERICUT帮助" width="w-[101px]">
            <BigButton icon={<HelpIcon />} label="刀具管理器帮助" width="w-[100px]" />
        </Group>
    </div>
);

const ToolList = () => (
    <div className="flex w-[315px] shrink-0 flex-col">
        <div className="flex h-10 items-center">
            <button type="button" aria-label="选择" className="flex h-[30px] w-[34px] items-center justify-center bg-[#ffff00]"><MouseIcon /></button>
            <button type="button" aria-label="视图" className="ml-[6px]">
                <svg width="13" height="16" viewBox="0 0 13 16">
                    <path d="M0.500 0.500h12v15h-12z" fill="#e3eefa" stroke="#5f8fc8" />
                    <path d="M2 3h3M7 3h4M2 6h3M7 6h4" stroke="#4a90c0" strokeWidth="1.400" />
                    <path d="M3 9h5v5M5 8v4h6" fill="none" stroke="#33485e" strokeWidth="1.200" />
                </svg>
            </button>
            <button type="button" aria-label="列表" className="ml-[7px] flex h-[22px] w-[25px] items-center justify-center rounded-[3px] border border-[#6cc5ee] bg-[#e4f4fc]">
                <svg width="18" height="16" viewBox="0 0 18 16">
                    <path d="M3 1v14M0 5h6M0 11h6" stroke="#222" strokeWidth="1.300" />
                    <path d="M3 0l2.500 3h-5zM3 16l2.500-3h-5z" fill="#222" />
                    <path d="M7.500 0.500h10v15h-10z" fill="#fff" stroke="#7d9cbf" />
                    <path d="M9 4h2M12.500 4h4M9 8h2M12.500 8h4M9 12h2M12.500 12h4" stroke="#7aa050" strokeWidth="1.500" />
                </svg>
            </button>
            <button type="button" aria-label="排序" className="ml-[7px]">
                <svg width="16" height="16" viewBox="0 0 16 16">
                    <path d="M4 0l4 6H5.500v9h-3V6H0z" fill="#3b82e0" stroke="#1d55a8" strokeWidth="0.600" />
                    <path d="M12 16l4-6h-2.500V1h-3v9H8z" fill="#58c63a" stroke="#2a8a1e" strokeWidth="0.600" />
                </svg>
            </button>
            <button type="button" aria-label="更多" className="ml-[13px]">
                <svg width="10" height="8" viewBox="0 0 10 8"><path d="M1 1.500h2L5 3.500l2-2h2V3L5 7 1 3z" fill="#fff" stroke="#222" /></svg>
            </button>
            <button type="button" aria-label="查找下一个" className="relative ml-[14px]">
                <Binoculars size={16} />
                <svg width="8" height="8" viewBox="0 0 8 8" className="absolute right-0 bottom-0"><circle cx="4" cy="4" r="4" fill="#2f86e0" /><path d="M1.500 4h5M4.500 2l2 2-2 2" fill="none" stroke="#fff" /></svg>
            </button>
            <button type="button" aria-label="查找上一个" className="relative ml-[10px]">
                <Binoculars size={16} />
                <svg width="8" height="8" viewBox="0 0 8 8" className="absolute bottom-0 left-0"><circle cx="4" cy="4" r="4" fill="#2f86e0" /><path d="M6.500 4h-5M3.500 2l-2 2 2 2" fill="none" stroke="#fff" /></svg>
            </button>
            <div className="relative mr-px ml-[5px] flex flex-1">
                <select aria-label="查找" className={`${field} h-[22px] flex-1 appearance-none`}><option></option></select>
                <Chevron className="pointer-events-none absolute top-2 right-[6px]" />
            </div>
        </div>
        <div className="min-h-0 flex-1 border border-[#828790] bg-white">
            <Tree rows={toolRows} />
        </div>
        <div className="mt-1 h-[71px] border border-[#828790] bg-white">
            <div className="flex h-[18px] items-center">
                <Guide across />
                <Art name="axes" />
                <span className="ml-[3px] text-[#0000ff]">坐标系统</span>
            </div>
        </div>
    </div>
);

const PointTable = ({ title, pick }) => (
    <fieldset className="mt-[11px] ml-4 min-w-0 border-t border-b border-l border-[#a0a0a0] pb-[7px] pl-[7px]">
        <legend className="ml-[2px] px-[3px] leading-4">{title}</legend>
        <div className="flex items-center gap-3 pt-[10px] pl-2">
            <button type="button" aria-label="添加"><PlusIcon /></button>
            <button type="button" aria-label="删除"><MinusIcon /></button>
            {pick && <button type="button" aria-label="拾取" className="h-4"><PointerIcon /></button>}
        </div>
        <div className="mt-[6px] h-[192px] border-t border-b border-l border-[#828790]">
            <table className="w-full table-fixed border-collapse">
                <thead>
                    <tr className="h-[19px] border-b border-[#828790]">
                        <th className="border-r border-[#828790] p-0 font-normal">ID</th>
                        <th className="p-0 font-normal">数值 (毫米)</th>
                    </tr>
                </thead>
            </table>
        </div>
    </fieldset>
);

const ToolInfo = () => {
    const [info, setInfo] = useState({ description: '', comment: '', unit: '毫米', direction: '90 90 0', point: '0 0 50' });
    const update = (e) => setInfo({ ...info, [e.target.name]: e.target.value });

    return (
        <div className="flex w-[497px] shrink-0 flex-col border border-[#828790]">
            <div className="flex min-h-0 flex-1">
                <div className="min-w-0 flex-1 overflow-hidden">
                    <div className="flex h-[31px] items-end border-b border-white pl-1">
                        <button type="button" className="h-[26px] border-t border-r-2 border-l border-t-white border-r-[#777] border-l-white px-1">刀具信息</button>
                    </div>
                    <button type="button" className="mt-[5px] ml-[10px] block h-[23px] w-[93px] rounded border border-[#a0a0a0]">设置为默认</button>
                    <fieldset className="mt-[6px] ml-4 min-w-0 border-t border-b border-l border-[#a0a0a0] pb-[6px] pl-9">
                        <legend className="-ml-[30px] px-[3px] leading-4">刀具信息 铣刀</legend>
                        <div className="flex flex-col gap-1 pt-[7px]">
                            <div className="flex items-center">
                                <label htmlFor="description" className="w-[52px]">描述</label>
                                <input id="description" name="description" value={info.description} onChange={update} className={`${field} h-6 w-[350px]`} />
                            </div>
                            <div className="flex items-center">
                                <label htmlFor="comment" className="w-[52px]">注释</label>
                                <input id="comment" name="comment" value={info.comment} onChange={update} className={`${field} h-6 w-[350px]`} />
                            </div>
                            <div className="flex items-center">
                                <label htmlFor="unit" className="w-[52px]">单位</label>
                                <div className="relative flex w-[138px]">
                                    <select id="unit" name="unit" value={info.unit} onChange={update} className={`${field} h-[22px] flex-1 appearance-none pl-px`}>
                                        <option>毫米</option>
                                    </select>
                                    <Chevron className="pointer-events-none absolute top-2 right-[5px]" />
                                </div>
                            </div>
                            <div className="flex items-center">
                                <label htmlFor="direction" className="w-[52px]">装夹方向</label>
                                <div className={`${field} flex h-6 w-[138px] items-center px-[2px]`}>
                                    <input id="direction" name="direction" value={info.direction} onChange={update} className="min-w-0 flex-1 outline-none" />
                                    <span className="text-[#c4c4ff]">度</span>
                                </div>
                                <label htmlFor="point" className="mx-1">装夹点</label>
                                <div className={`${field} flex h-6 w-[138px] items-center px-[2px]`}>
                                    <input id="point" name="point" value={info.point} onChange={update} className="min-w-0 flex-1 outline-none" />
                                    <span className="text-[#c4c4ff]">毫米</span>
                                </div>
                                <button type="button" aria-label="拾取" className="ml-2"><PointerIcon /></button>
                            </div>
                        </div>
                    </fieldset>
                    <PointTable title="对刀点" pick />
                    <PointTable title="刀补" />
                </div>
                <div className="w-3 bg-white pt-px pl-px">
                    <div className="h-[73%] w-[9px] border-t border-l border-[#777] bg-[#a6a6a6]" />
                </div>
            </div>
            <div className="flex h-3">
                <div className="flex-1 bg-white pt-px pl-px">
                    <div className="h-[9px] w-[94%] border-t border-l border-[#777] bg-[#a6a6a6]" />
                </div>
                <div className="w-3" />
            </div>
        </div>
    );
};

const AxisLabel = ({ x, y, fill, children }) => (
    <text x={x} y={y} fill={fill} fontSize="13" fontFamily="Liberation Sans, sans-serif">{children}</text>
);

const ToolView = () => (
    <div className="flex min-w-0 flex-1 flex-col">
        <h3 className="h-[18px] text-center leading-[18px]">显示刀具</h3>
        <svg width="100%" viewBox="0 0 423 539" preserveAspectRatio="xMidYMid slice" className="block min-h-0 flex-1">
            <defs>
                <linearGradient id="viewBg" x1="0" y1="1" x2="1" y2="0">
                    <stop offset="0" stopColor="#3366ff" />
                    <stop offset="0.350" stopColor="#6296ff" />
                    <stop offset="0.700" stopColor="#8bbeff" />
                    <stop offset="1" stopColor="#99ccff" />
                </linearGradient>
                <linearGradient id="shank" x1="0" y1="0" x2="1" y2="0">
                    <stop offset="0" stopColor="#7290b5" />
                    <stop offset="0.400" stopColor="#a9c2e2" />
                    <stop offset="0.700" stopColor="#a4bddd" />
                    <stop offset="1" stopColor="#6b88ac" />
                </linearGradient>
                <linearGradient id="cutter" x1="0" y1="0" x2="1" y2="0">
                    <stop offset="0" stopColor="#945800" />
                    <stop offset="0.200" stopColor="#e88a00" />
                    <stop offset="0.450" stopColor="#ffa608" />
                    <stop offset="0.800" stopColor="#f29200" />
                    <stop offset="1" stopColor="#945800" />
                </linearGradient>
                <radialGradient id="glow">
                    <stop offset="0" stopColor="#ffd010" />
                    <stop offset="1" stopColor="#ffb000" stopOpacity="0" />
                </radialGradient>
                <filter id="soft" x="-1" y="-0.200" width="3" height="1.400"><feGaussianBlur stdDeviation="5" /></filter>
            </defs>
            <rect width="423" height="539" fill="url(#viewBg)" />
            <path d="M182 168h61v344h-61z" fill="#1d3357" filter="url(#soft)" />
            <path d="M190.500 19h42v150h-42z" fill="url(#shank)" stroke="#6f8cb0" />
            <path d="M191 163h41v6h-41z" fill="#40506a" opacity="0.400" />
            <path d="M191 169h41v338h-41z" fill="url(#cutter)" />
            <ellipse cx="213" cy="360" rx="11" ry="130" fill="url(#glow)" />
            <path d="M191 507h41l-14 7h-14z" fill="#a86400" />
            <path d="M191 169h41M191 507h41" stroke="#5c3a00" />
            <path d="M164 18h47" stroke="#0000e0" strokeWidth="1.500" />
            <AxisLabel x="138" y="17" fill="#0000e0">Z g</AxisLabel>
            <AxisLabel x="213" y="16" fill="#f00000">X</AxisLabel>
            <g stroke="#1a78a8" strokeWidth="2" fill="none">
                <circle cx="211" cy="18" r="10" />
                <path d="M201 18h20M211 8v20" />
            </g>
            <path d="M211 20v52" stroke="#00f020" strokeWidth="1.500" />
            <AxisLabel x="212" y="87" fill="#00f020">Y</AxisLabel>
            <AxisLabel x="212" y="445" fill="#0000e0">Z</AxisLabel>
            <path d="M211 502v-44" stroke="#0000e0" strokeWidth="1.500" />
            <path d="M211 450l3 9h-6z" fill="#0000e0" />
            <AxisLabel x="213" y="517" fill="#00f020">Y</AxisLabel>
            <circle cx="211" cy="518" r="10" fill="#2f9ad0" fillOpacity="0.850" stroke="#1a78a8" strokeWidth="2" />
            <path d="M211 518v-9a9 9 0 0 1 9 9zM211 518v9a9 9 0 0 1-9-9z" fill="#a8702a" opacity="0.600" />
            <path d="M201 518h20M211 508v20" stroke="#1a78a8" strokeWidth="1.500" />
            <path d="M222 519h50" stroke="#e00000" strokeWidth="1.500" />
            <path d="M280 519l-9 3v-6z" fill="#e00000" />
            <AxisLabel x="284" y="517" fill="#e00000">X</AxisLabel>
        </svg>
    </div>
);

const ToolManager = () => (
    <section className="absolute top-[376px] right-[10px] bottom-[83px] left-[561px] flex border-t border-r border-white">
        <div className="flex min-w-0 flex-1 flex-col border-r border-b-2 border-l-2 border-[#083264] bg-[#f0f0f0]">
            <ManagerHeader />
            <ManagerRibbon />
            <div className="flex min-h-0 flex-1 gap-[5px]">
                <ToolList />
                <div className="flex min-w-0 flex-1 flex-col">
                    <div className="flex min-h-0 flex-1 gap-[5px]">
                        <ToolInfo />
                        <ToolView />
                    </div>
                    <div className="mt-[23px] flex h-[71px] pr-px">
                        <div className="ml-px flex-1 border border-[#828790] bg-white" />
                        <div className="flex flex-col">
                            <button type="button" aria-label="日志" className="flex h-6 w-[27px] items-center justify-center border-r-2 border-b-2 border-[#888]">
                                <svg width="16" height="14" viewBox="0 0 16 14">
                                    <rect x="0.500" y="0.500" width="15" height="13" rx="1" fill="url(#gBlue)" stroke="#1a4fae" />
                                    <path d="M2 11.500h13" stroke="#fff" strokeWidth="1.500" />
                                    <Badge x="8.500" y="7" size="5.500" fill="#fff">LOG</Badge>
                                </svg>
                            </button>
                            <button type="button" aria-label="测量" className="flex h-6 w-[27px] items-center justify-center border-2 border-[#888] bg-[#cfcfcf]">
                                <svg width="16" height="14" viewBox="0 0 16 14">
                                    <path d="M1 1.500h14v3H9.500V6.500H13v2H9.500V13h-2V4.500H5V13H3.500V9H1V7.500h2.500V4.500H1z" fill="#e8eef4" stroke="#44586c" />
                                </svg>
                            </button>
                        </div>
                    </div>
                </div>
            </div>
        </div>
    </section>
);

const App = () => (
    <div className="relative flex h-screen flex-col overflow-hidden bg-[#f0f0f0] font-['Liberation_Sans','Noto_Sans_CJK_SC',sans-serif] text-[12px] leading-4 text-black">
        <SvgDefs />
        <MainHeader />
        <div className="flex min-h-0 flex-1">
            <ProjectPanel />
            <Workspace />
        </div>
        <ToolManager />
        <p className="absolute right-1 bottom-1 flex items-baseline font-['Liberation_Mono','Noto_Sans_CJK_SC',monospace] text-[13px] text-[#666]">
            <span>UG</span>
            <span className="text-base leading-4">爱好者论坛</span>
            <span className="ml-2">WWW.UGSNX.COM</span>
        </p>
    </div>
);

export default App;
